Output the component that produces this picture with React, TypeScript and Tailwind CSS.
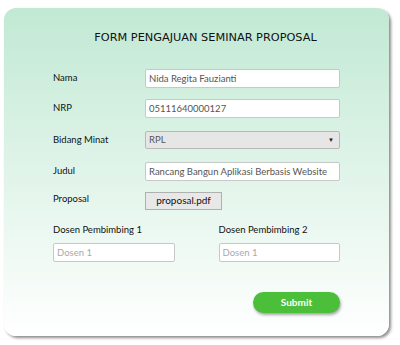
export default function App() {
  const inputCls =
    'h-[19px] w-full rounded-[2px] border border-[#c8c8c8] bg-white px-[3px] text-[9.5px] text-[#555] outline-none';
  const labelCls = 'w-[92px] shrink-0 text-[9.5px] text-[#111]';

  return (
    <div className="h-[345px] w-[400px] bg-white pl-[4px] pt-[8px] font-['Lato',sans-serif]">
      <div className="relative h-[328px] w-[385px] rounded-[12px] bg-gradient-to-b from-[#c1e9d4] to-[#ffffff] shadow-[2px_2px_3px_rgba(0,0,0,0.45)]">
        <h1 className="pl-[18px] pt-[22px] text-center font-['DejaVu_Sans',sans-serif] text-[11.3px] text-[#111]">
          FORM PENGAJUAN SEMINAR PROPOSAL
        </h1>

        <div className="mt-[22px] flex flex-col pl-[49px] pr-[49px]">
          <div className="flex h-[19px] items-center">
            <label className={labelCls}>Nama</label>
            <input className={inputCls} readOnly value="Nida Regita Fauzianti" />
          </div>
          <div className="mt-[11px] flex h-[19px] items-center">
            <label className={labelCls}>NRP</label>
            <input className={inputCls} readOnly value="05111640000127" />
          </div>
          <div className="mt-[13px] flex h-[18px] items-center">
            <label className={labelCls}>Bidang Minat</label>
            <div className="flex h-[18px] w-full items-center justify-between rounded-[2px] border border-[#b8b8b8] bg-[#e6e6e6] px-[3px] text-[9.5px] text-[#555]">
              <span>RPL</span>
              <span className="pr-[2px] text-[6px] text-[#222]">▼</span>
            </div>
          </div>
          <div className="mt-[13px] flex h-[19px] items-center">
            <label className={labelCls}>Judul</label>
            <input className={inputCls} readOnly value="Rancang Bangun Aplikasi Berbasis Website" />
          </div>
          <div className="mt-[11px] flex h-[18px] items-center">
            <label className={`${labelCls} -mt-[4px]`}>Proposal</label>
            <div className="flex h-[18px] w-[77px] items-center justify-center border border-[#b0b0b0] bg-[#e8e8e8] text-[10px] text-[#111]">
              proposal.pdf
            </div>
          </div>

          <div className="mt-[13px] grid grid-cols-2 gap-x-[44px]">
            <div>
              <div className="text-[9.5px] text-[#111]">Dosen Pembimbing 1</div>
              <input className={`${inputCls} mt-[6px] w-[122px] placeholder:text-[#aaa]`} placeholder="Dosen 1" />
            </div>
            <div>
              <div className="text-[9.5px] text-[#111]">Dosen Pembimbing 2</div>
              <input className={`${inputCls} mt-[6px] w-[122px] placeholder:text-[#aaa]`} placeholder="Dosen 1" />
            </div>
          </div>

          <div className="mt-[30px] flex justify-end">
            <button className="h-[21px] w-[87px] rounded-full bg-[#4cbf3a] text-[10px] font-bold text-white shadow-[1px_2px_3px_rgba(0,0,0,0.35)]">
              Submit
            </button>
          </div>
        </div>
      </div>
    </div>
  );
}
